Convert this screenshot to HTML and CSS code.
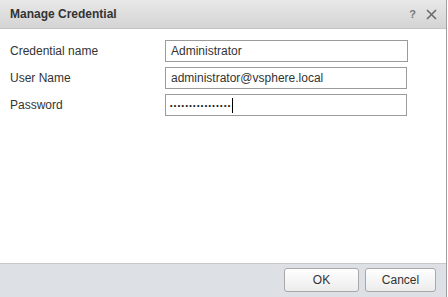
FILE: index.html
```html
<!DOCTYPE html>
<html>
<head>
<meta charset="utf-8">
<link rel="stylesheet" href="styles.css">
</head>
<body>
<div class="dialog">
  <div class="header">
    <span class="title">Manage Credential</span>
    <span class="tools">
      <span class="help">?</span>
      <svg class="close" width="11" height="11" viewBox="0 0 11 11"><path d="M1 1L10 10M10 1L1 10" stroke="#6b6b6b" stroke-width="1.6" fill="none"/></svg>
    </span>
  </div>
  <div class="content">
    <div class="row"><label class="label">Credential name</label><div class="input">Administrator</div></div>
    <div class="row"><label class="label">User Name</label><div class="input">administrator@vsphere.local</div></div>
    <div class="row"><label class="label">Password</label><div class="input pw"><span class="dots">••••••••••••••••</span><span class="caret"></span></div></div>
  </div>
  <div class="footer">
    <button class="btn ok">OK</button>
    <button class="btn cancel">Cancel</button>
  </div>
</div>
</body>
</html>
```
FILE: styles.css
```css
html, body { margin: 0; padding: 0; background: #fff; }
body { font-family: "Liberation Sans", Arial, sans-serif; font-size: 12px; color: #333; }
.dialog { width: 446px; height: 297px; display: flex; flex-direction: column; border-right: 1px solid #a0a0a0; }
.header { height: 29px; flex: none; display: flex; align-items: center; justify-content: space-between; padding: 0 9px 0 10px; background: linear-gradient(#e8e8e8, #d4d4d4); border-bottom: 1px solid #c4c4c4; box-sizing: border-box; }
.title { font-weight: bold; color: #333; font-size: 12px; }
.tools { display: flex; align-items: center; gap: 10px; }
.help { color: #777; font-size: 11px; font-weight: bold; }
.close { display: block; }
.content { flex: 1; padding: 11px 0 0 10px; display: flex; flex-direction: column; gap: 5px; }
.row { display: flex; align-items: center; height: 22px; }
.label { width: 155px; color: #333; }
.input { box-sizing: border-box; height: 22px; width: 242px; border: 1px solid #9b9b9b; padding: 0 5px; line-height: 20px; color: #333; white-space: nowrap; }
.row:first-child .input { width: 243px; }
.pw { display: flex; align-items: center; padding-left: 4px; }
.dots { font-size: 7px; letter-spacing: 1.4px; color: #111; line-height: 1; font-weight: bold; }
.caret { display: inline-block; width: 1px; height: 15px; background: #000; margin-left: 0; }
.footer { height: 34px; flex: none; box-sizing: border-box; border-top: 1px solid #c8c8c8; background: #dde1e5; display: flex; justify-content: flex-end; align-items: flex-start; padding: 4px 10px 0 0; gap: 6px; }
.btn { font-family: "Liberation Sans", Arial, sans-serif; font-size: 12px; color: #333; height: 24px; border: 1px solid #a8a8a8; border-radius: 3px; background: linear-gradient(#ffffff, #ececec); padding: 0; }
.ok { width: 75px; }
.cancel { width: 71px; }
```
